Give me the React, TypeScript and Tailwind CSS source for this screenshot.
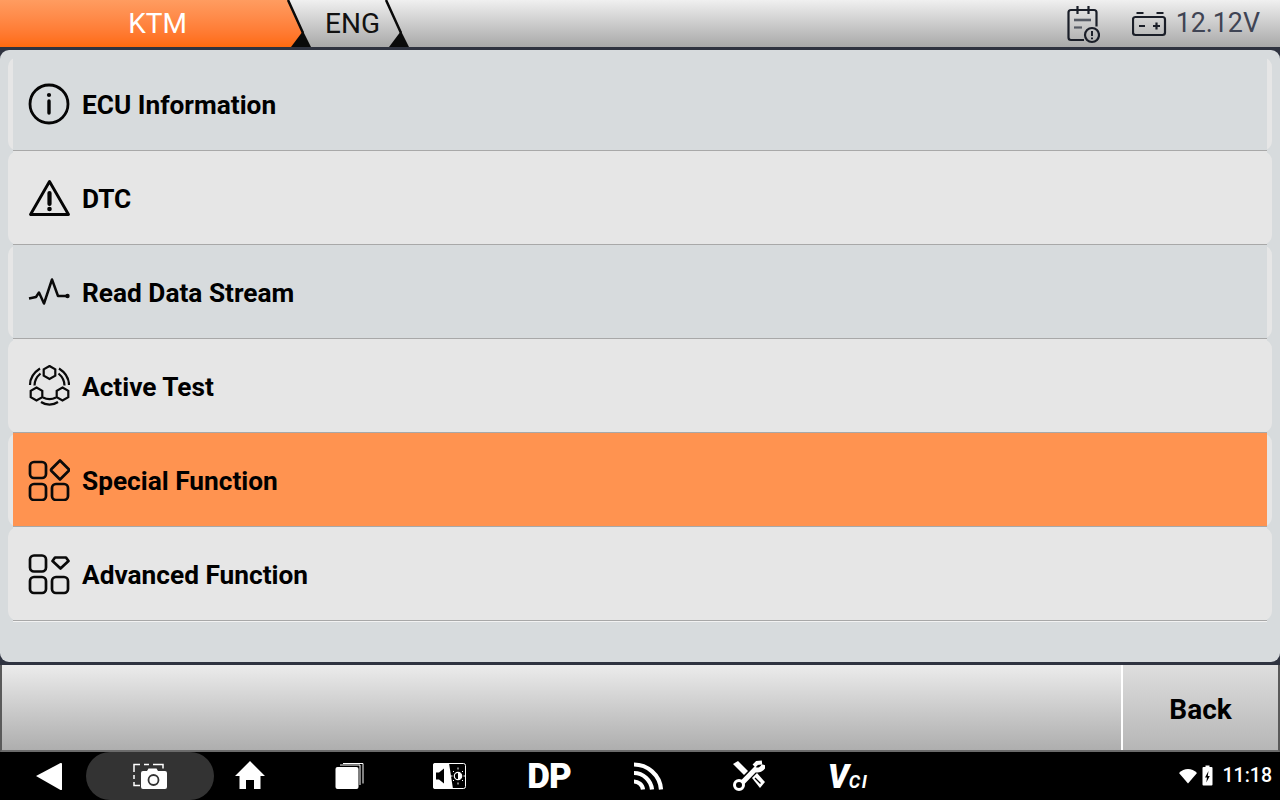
import type { ReactNode } from "react";

const rows: { label: string; bg: string; icon: ReactNode }[] = [
  {
    label: "ECU Information",
    bg: "bg-[#d7dbdd]",
    icon: (
      <svg viewBox="28 83 42 42" className="h-[42px] w-[42px]" fill="none" stroke="#050505" strokeWidth="2.800">
        <circle cx="49" cy="104" r="19" />
        <circle cx="49" cy="95" r="2.100" fill="#050505" stroke="none" />
        <path d="M49 101v12" strokeWidth="3.400" strokeLinecap="round" />
      </svg>
    ),
  },
  {
    label: "DTC",
    bg: "bg-[#e6e6e6]",
    icon: (
      <svg viewBox="28 177 42 42" className="h-[42px] w-[42px]" fill="none" stroke="#050505" strokeWidth="2.900" strokeLinejoin="round">
        <path d="M49.500 181.500 30.500 214.500h38z" />
        <path d="M49.500 193v11" strokeWidth="4.200" strokeLinecap="round" />
        <circle cx="49.500" cy="209" r="2.300" fill="#050505" stroke="none" />
      </svg>
    ),
  },
  {
    label: "Read Data Stream",
    bg: "bg-[#d7dbdd]",
    icon: (
      <svg viewBox="28 271 42 42" className="h-[42px] w-[42px]" fill="none" stroke="#0a0a0a" strokeWidth="2.500" strokeLinejoin="round">
        <path d="M29 298.500 36 297l3-4.500 5 11 8-24 6 16.500h9" />
        <circle cx="67.500" cy="296" r="2.200" fill="#0a0a0a" stroke="none" />
      </svg>
    ),
  },
  {
    label: "Active Test",
    bg: "bg-[#e6e6e6]",
    icon: (
      <svg viewBox="28 365 42 42" className="h-[42px] w-[42px]" fill="none" stroke="#0a0a0a" strokeWidth="2.200">
        <path d="M49.500 366l5.800 3.300v6.400l-5.800 3.300-5.800-3.300v-6.400z" />
        <path d="M36.500 387.500l5.800 3.300v6.400l-5.800 3.300-5.800-3.300v-6.400z" />
        <path d="M62.500 387.500l5.800 3.300v6.400l-5.800 3.300-5.800-3.300v-6.400z" />
        <path d="M30 385c0-6 3-12 10-16.500M34.500 385.500c0-5 2.500-9 6-12" />
        <path d="M69 385c0-6-3-12-10-16.500M64.500 385.500c0-5-2.500-9-6-12" />
        <path d="M43 397.500c4 2 9 2 13 0M41 402c5 3.500 12 3.500 17 0" />
      </svg>
    ),
  },
  {
    label: "Special Function",
    bg: "bg-[#ff9350]",
    icon: (
      <svg viewBox="28 459 42 42" className="h-[42px] w-[42px]" fill="none" stroke="#0a0a0a" strokeWidth="2.700">
        <rect x="30" y="462" width="16" height="16" rx="4" />
        <rect x="30" y="484" width="16" height="16" rx="4" />
        <rect x="52" y="484" width="16" height="16" rx="4" />
        <path d="M60 460.500l8.500 8.500a1.500 1.500 0 0 1 0 2L60 479.500l-8.500-8.500a1.500 1.500 0 0 1 0-2z" strokeLinejoin="round" />
      </svg>
    ),
  },
  {
    label: "Advanced Function",
    bg: "bg-[#e6e6e6]",
    icon: (
      <svg viewBox="28 553 42 42" className="h-[42px] w-[42px]" fill="none" stroke="#0a0a0a" strokeWidth="2.700">
        <rect x="30" y="555.500" width="16" height="16" rx="4" />
        <rect x="30" y="577" width="16" height="16" rx="4" />
        <rect x="52" y="577" width="16" height="16" rx="4" />
        <path d="M55 557.500h11l2.500 3.500-8 7.500-8-7.500z" strokeLinejoin="round" />
      </svg>
    ),
  },
];

function StatusIcons() {
  return (
    <div className="ml-auto flex items-center">
      <svg viewBox="1066 4 34 40" className="h-10 w-[34px]" fill="none" stroke="#1a1e28" strokeWidth="2.200">
        <path d="M1084 40h-13a2.500 2.500 0 0 1-2.500-2.500v-25a2.500 2.500 0 0 1 2.500-2.500h23a2.500 2.500 0 0 1 2.500 2.500v14" />
        <path d="M1077.500 6v8M1088.500 6v8" />
        <path d="M1074 20h17" strokeWidth="2.600" stroke="#555a64" />
        <path d="M1074 27.500h8" strokeWidth="2.200" stroke="#555a64" />
        <circle cx="1092" cy="35" r="7" />
        <path d="M1092 31v5M1092 37.500v1.800" strokeWidth="2" />
      </svg>
      <svg viewBox="1132 10 36 28" className="ml-[32px] h-7 w-9" fill="none" stroke="#1a1e28" strokeWidth="2.200">
        <rect x="1133" y="17" width="32" height="18" rx="2.500" />
        <path d="M1136.500 13h7M1156.500 13h7M1139 26h6M1153 26h7M1156.500 22.500v7" />
      </svg>
      <span className="ml-2 mr-5 text-[26.800px] leading-none text-[#3f4454]">12.12V</span>
    </div>
  );
}

function NavBar() {
  return (
    <div className="flex h-12 items-center bg-black text-white">
      <div className="w-[86px] pl-[35px]">
        <svg viewBox="35 762 28 28" className="h-7 w-7" fill="#fff">
          <path d="M36 776 60.500 763q1.500-.5 1.500 1v25q0 1.500-1.500 1z" />
        </svg>
      </div>
      <div className="flex h-12 w-[128px] items-center justify-center rounded-full bg-[#333333]">
        <svg viewBox="132 762 36 28" className="h-7 w-9">
          <path d="M134 772v-7.500h6M144 764.500h5M153 764.500h10v4M134 775v4M134 782v3.500h6" fill="none" stroke="#fff" strokeWidth="1.500" />
          <path d="M141 773a2 2 0 0 1 2-2h4l1.500-2.500h8l1.500 2.500h7a2 2 0 0 1 2 2v14a2 2 0 0 1-2 2h-22a2 2 0 0 1-2-2z" fill="#fff" />
          <circle cx="153.500" cy="780" r="5" fill="#fff" stroke="#333" strokeWidth="1.800" />
        </svg>
      </div>
      <div className="flex w-[71px] justify-center">
        <svg viewBox="234 760 32 32" className="h-8 w-8" fill="#fff">
          <path d="M250 761 265 776h-4.500v13h-6.500v-9h-8v9h-6.500v-13H235z" />
        </svg>
      </div>
      <div className="flex w-[127px] justify-center">
        <svg viewBox="334 762 30 28" className="h-7 w-[30px]" fill="#fff">
          <rect x="335.500" y="767" width="23" height="22" rx="2" />
          <path d="M340 765h20v20" fill="none" stroke="#fff" strokeWidth="1" />
          <path d="M343 763.500h20v20" fill="none" stroke="#fff" strokeWidth="1" />
        </svg>
      </div>
      <div className="flex w-[75px] justify-center">
        <svg viewBox="433 762 34 28" className="h-7 w-[34px]">
          <rect x="433.500" y="763.500" width="32" height="25" rx="2" fill="#000" stroke="#fff" />
          <path d="M435 763h14l4 26h-18a2 2 0 0 1-2-2v-22a2 2 0 0 1 2-2z" fill="#fff" />
          <path d="M436 772.500h3l5-4v15l-5-4h-3z" fill="#000" />
          <circle cx="458" cy="776" r="3.700" fill="none" stroke="#fff" strokeWidth="1.200" />
          <path d="M458 772.500v7a3.500 3.500 0 0 0 0-7z" fill="#fff" />
          <path d="M458 767.500v2M458 782.500v2M451 776h1.500M463.500 776h1.500M453 771l1 1M463 771l-1 1M453 781l1-1M463 781l-1-1" stroke="#fff" strokeWidth="1" />
        </svg>
      </div>
      <div className="flex w-[124px] justify-center">
        <span className="text-[35px] font-black leading-none tracking-[-1px]">DP</span>
      </div>
      <div className="flex w-[73px] justify-center">
        <svg viewBox="634 762 32 28" className="h-7 w-8" fill="none" stroke="#fff" strokeWidth="4.200">
          <path d="M636 764.500c13 0 26 10 27 25" />
          <path d="M636 773c9 0 17 7 18 16.500" />
          <path d="M636 781.500c4 0 8.500 3 9 8" />
        </svg>
      </div>
      <div className="flex w-[128px] justify-center">
        <svg viewBox="733 761 34 32" className="h-8 w-[34px]" fill="none" stroke="#fff">
          <path d="M735 765 740 762 750 772 746 776z" fill="#fff" stroke="none" />
          <path d="M766 766c-1.500 4.500-6 6-9 4.500L744 784" strokeWidth="5" />
          <path d="M764 763.500l-5 .5-3 3" strokeWidth="4" />
          <circle cx="741" cy="786" r="4.500" strokeWidth="3" />
          <path d="M754 779l5-5 8 9-5 6z" fill="#fff" stroke="none" />
          <path d="M757 779l5.500 5.500" stroke="#000" strokeWidth="1.300" />
        </svg>
      </div>
      <div className="flex w-[71px] items-baseline justify-center pl-px italic leading-none">
        <span className="text-[33px] font-black">V</span>
        <span className="text-[18px] font-bold tracking-[1.500px]">CI</span>
      </div>
      <div className="ml-auto flex items-center pr-2">
        <svg viewBox="1177 766 20 20" className="h-5 w-5" fill="#fff">
          <path d="M1187 783.500 1178 773q4-4 9-4t9 4z" />
        </svg>
        <svg viewBox="1203 765 14 22" className="ml-[3px] h-[22px] w-3.5">
          <path d="M1207.500 767v-1.500h4v1.500h2a1 1 0 0 1 1 1v16.500a1 1 0 0 1-1 1h-8a1 1 0 0 1-1-1v-16.500a1 1 0 0 1 1-1z" fill="#fff" />
          <path d="M1210.500 771 1207 777.500h2l-.7 5 3.500-6.500h-2z" fill="#000" />
        </svg>
        <span className="ml-[8px] text-[19.500px] font-medium leading-none">11:18</span>
      </div>
    </div>
  );
}

export default function App() {
  return (
    <div className="flex h-screen w-[1280px] flex-col overflow-hidden bg-[#2f3340] font-['Roboto',sans-serif]">
      <header className="relative flex h-[47px] shrink-0 items-center bg-gradient-to-b from-[#f0f0f0] to-[#a9a9a9]">
        <div className="flex h-full w-[303px] items-center justify-center bg-gradient-to-b from-[#ff9c60] to-[#ff6a0c] pl-3 text-[28px] leading-none text-white [clip-path:polygon(0_0,288px_0,303px_33px,292px_47px,0_47px)]">
          KTM
        </div>
        <span className="ml-[22px] text-[28px] leading-none text-[#111]">ENG</span>
        <StatusIcons />
        <svg viewBox="0 0 420 47" className="absolute left-0 top-0 h-[47px] w-[420px]">
          <path d="M288 0 303 33M386 0 401 33" stroke="#0a0a0a" strokeWidth="2.500" fill="none" />
          <path d="M291 47 303 31 311 47zM389 47 401 31 409 47z" fill="#0a0a0a" />
        </svg>
      </header>

      <main className="mt-[3px] h-[612px] shrink-0 overflow-hidden rounded-[9px] bg-[#d7dbdd] pt-[7px]">
        {rows.map((row) => (
          <div key={row.label} className="mx-2 h-[94px] rounded-[10px] bg-[#e6e6e6] px-[5px]">
            <div className={`relative flex h-full items-center border-b border-[#a8a8a8] pl-[15px] shadow-[0_1px_0_#f2f2f2] ${row.bg}`}>
              {row.icon}
              <span className="ml-3 mt-[3px] text-[26.250px] font-bold leading-none text-black">{row.label}</span>
            </div>
          </div>
        ))}
      </main>

      <footer className="mt-[3px] flex h-[87px] shrink-0 border-x-2 border-b-2 border-[#5a5a5a] border-b-[#6b6b6b] bg-gradient-to-b from-[#ececec] to-[#aeaeae]">
        <div className="flex-1" />
        <button
          type="button"
          className="w-[157px] border-l-2 border-white bg-gradient-to-b from-[#dedede] to-[#b6b6b6] pt-[5px] text-[28px] font-bold leading-none text-black"
        >
          Back
        </button>
      </footer>

      <NavBar />
    </div>
  );
}
